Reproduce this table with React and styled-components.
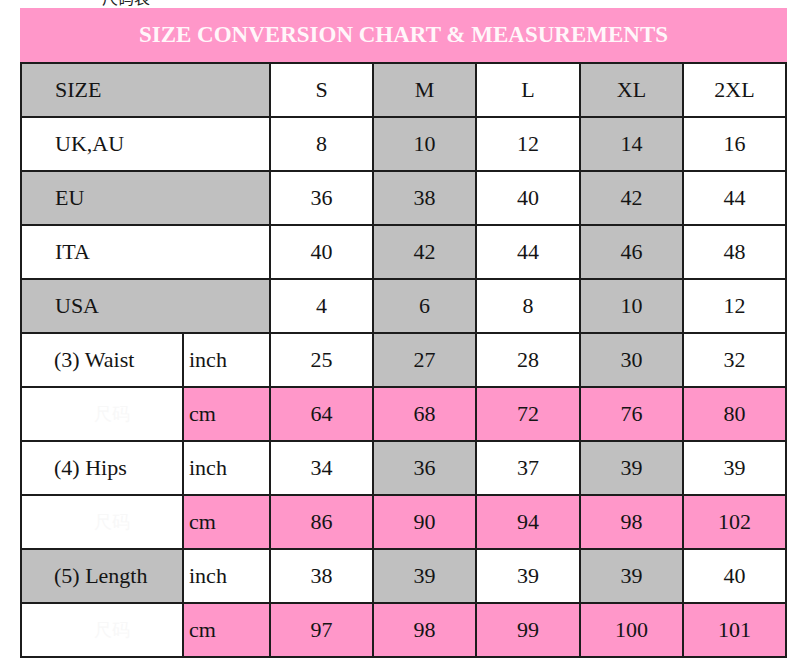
import React from "react";
import styled, { createGlobalStyle } from "styled-components";

const Global = createGlobalStyle`
  html, body { margin: 0; padding: 0; background: #ffffff; }
  body { font-family: "Liberation Serif", "Times New Roman", serif; }
`;

const PINK = "#ff97c9";
const GRAY = "#c0c0c0";
const WHITE = "#ffffff";

const Page = styled.div`
  width: 800px;
  height: 665px;
  background: #fff;
  padding-left: 20px;
  box-sizing: border-box;
  overflow: hidden;
`;

const Caption = styled.div`
  height: 8px;
  display: flex;
  align-items: flex-end;
  overflow: hidden;
  padding-left: 82px;
  padding-bottom: 3px;
  box-sizing: border-box;
  font-family: "Noto Sans CJK SC", sans-serif;
  font-size: 16px;
  line-height: 16px;
  color: #222;
`;

const Banner = styled.div`
  width: 767px;
  height: 54px;
  background: ${PINK};
  display: flex;
  align-items: center;
  justify-content: center;
  color: #fff6fa;
  font-family: "Liberation Serif", "Times New Roman", serif;
  font-weight: bold;
  font-size: 23px;
`;

const Grid = styled.div`
  display: grid;
  grid-template-columns: 160px 85px 101px 101px 102px 101px 101px;
  grid-auto-rows: 52px;
  gap: 2px;
  padding: 2px;
  width: 767px;
  box-sizing: border-box;
  background: #1c1c1c;
`;

const Cell = styled.div`
  background: ${(p) => p.$bg};
  display: flex;
  align-items: center;
  justify-content: ${(p) => (p.$align === "left" ? "flex-start" : "center")};
  padding-left: ${(p) => p.$pad || 0}px;
  grid-column: ${(p) => (p.$span ? `span ${p.$span}` : "auto")};
  font-family: "Liberation Serif", "Times New Roman", serif;
  font-size: 22px;
  color: #141414;
  white-space: nowrap;
`;

const Ghost = styled.span`
  color: #f8f8f8;
  font-size: 18px;
  padding-left: 40px;
`;

const sizes = ["S", "M", "L", "XL", "2XL"];
const alt = [WHITE, GRAY, WHITE, GRAY, WHITE];

const rows = [
  { label: "SIZE", labelBg: GRAY, values: sizes },
  { label: "UK,AU", labelBg: WHITE, values: ["8", "10", "12", "14", "16"] },
  { label: "EU", labelBg: GRAY, values: ["36", "38", "40", "42", "44"] },
  { label: "ITA", labelBg: WHITE, values: ["40", "42", "44", "46", "48"] },
  { label: "USA", labelBg: GRAY, values: ["4", "6", "8", "10", "12"] },
  { label: "(3) Waist", labelBg: WHITE, unit: "inch", values: ["25", "27", "28", "30", "32"] },
  { label: "", labelBg: WHITE, unit: "cm", pink: true, values: ["64", "68", "72", "76", "80"] },
  { label: "(4) Hips", labelBg: WHITE, unit: "inch", values: ["34", "36", "37", "39", "39"] },
  { label: "", labelBg: WHITE, unit: "cm", pink: true, values: ["86", "90", "94", "98", "102"] },
  { label: "(5) Length", labelBg: GRAY, unit: "inch", values: ["38", "39", "39", "39", "40"] },
  { label: "", labelBg: WHITE, unit: "cm", pink: true, values: ["97", "98", "99", "100", "101"] },
];

export default function App() {
  return (
    <Page>
      <Global />
      <Caption>尺码表</Caption>
      <Banner>SIZE CONVERSION CHART &amp; MEASUREMENTS</Banner>
      <Grid>
        {rows.map((r, i) => (
          <React.Fragment key={i}>
            {r.unit ? (
              <>
                <Cell $bg={r.labelBg} $align="left" $pad={32}>
                  {r.label || <Ghost>尺码</Ghost>}
                </Cell>
                <Cell $bg={r.pink ? PINK : WHITE} $align="left" $pad={5}>
                  {r.unit}
                </Cell>
              </>
            ) : (
              <Cell $bg={r.labelBg} $align="left" $pad={33} $span={2}>
                {r.label}
              </Cell>
            )}
            {r.values.map((v, j) => (
              <Cell key={j} $bg={r.pink ? PINK : alt[j]}>
                {v}
              </Cell>
            ))}
          </React.Fragment>
        ))}
      </Grid>
    </Page>
  );
}
